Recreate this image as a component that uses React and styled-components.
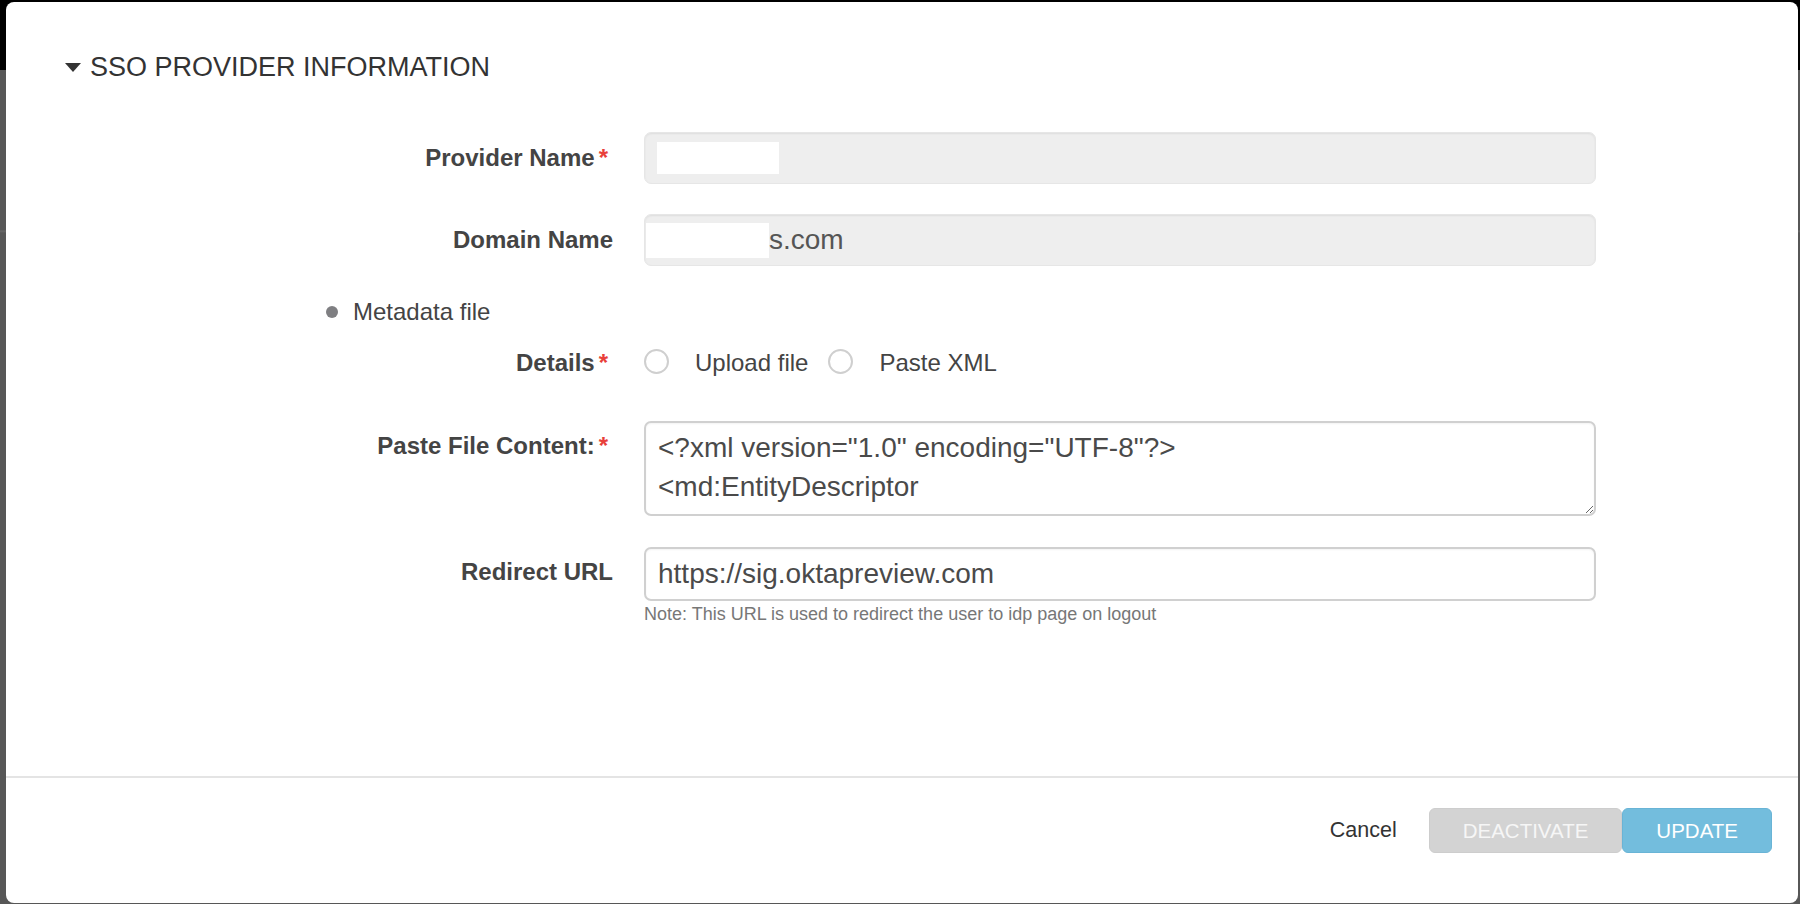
import styled, { createGlobalStyle } from "styled-components"

const GlobalStyle = createGlobalStyle`
  html, body {
    margin: 0;
    padding: 0;
  }
  body {
    font-family: "Liberation Sans", Arial, Helvetica, sans-serif;
    background: #000;
  }
  * {
    box-sizing: border-box;
  }
`

const App = () => {
  return (
    <>
      <GlobalStyle />
      <Page>
        <Modal>
          <Body>
            <SectionTitle>
              <Caret />
              SSO PROVIDER INFORMATION
            </SectionTitle>

            <Row $mt={49}>
              <Label $pt={12} $required>
                Provider Name<Required>*</Required>
              </Label>
              <ReadonlyField>
                <Redact $ml={12} $w={122} $h={32} />
              </ReadonlyField>
            </Row>

            <Row $mt={30}>
              <Label $pt={12}>Domain Name</Label>
              <ReadonlyField>
                <Redact $ml={1} $w={123} $h={35} />
                <FieldText>s.com</FieldText>
              </ReadonlyField>
            </Row>

            <BulletRow>
              <Dot />
              Metadata file
            </BulletRow>

            <Row $mt={23}>
              <Label $pt={0} $required>
                Details<Required>*</Required>
              </Label>
              <RadioGroup>
                <Radio />
                <RadioText>Upload file</RadioText>
                <Radio />
                <RadioText>Paste XML</RadioText>
              </RadioGroup>
            </Row>

            <Row $mt={44}>
              <Label $pt={11} $required>
                Paste File Content:<Required>*</Required>
              </Label>
              <XmlArea
                readOnly
                defaultValue={'<?xml version="1.0" encoding="UTF-8"?>\n<md:EntityDescriptor'}
              />
            </Row>

            <Row $mt={31}>
              <Label $pt={11}>Redirect URL</Label>
              <div>
                <TextInput readOnly defaultValue="https://sig.oktapreview.com" />
                <Note>Note: This URL is used to redirect the user to idp page on logout</Note>
              </div>
            </Row>
          </Body>

          <Footer>
            <CancelLink>Cancel</CancelLink>
            <Button $variant="muted">DEACTIVATE</Button>
            <Button $variant="primary">UPDATE</Button>
          </Footer>
        </Modal>
      </Page>
    </>
  )
}

export default App

const Page = styled.div`
  height: 904px;
  width: 1800px;
  display: flex;
  padding: 2px 2px 1px 6px;
  background: linear-gradient(
    to bottom,
    #000 0,
    #000 70px,
    #575757 70px,
    #575757 230px,
    #6a6a6a 231px,
    #575757 233px,
    #575757 100%
  );
`

const Modal = styled.div`
  flex: 1;
  display: flex;
  flex-direction: column;
  background: #fff;
  border-radius: 8px;
  overflow: hidden;
`

const Body = styled.div`
  flex: 1;
  padding-top: 49px;
`

const SectionTitle = styled.div`
  display: flex;
  align-items: center;
  gap: 9px;
  padding-left: 59px;
  font-size: 27px;
  line-height: 32px;
  color: #333;
`

const Caret = styled.span`
  width: 0;
  height: 0;
  border-left: 8px solid transparent;
  border-right: 8px solid transparent;
  border-top: 9px solid #333;
`

const Row = styled.div`
  display: grid;
  grid-template-columns: 313px 952px;
  column-gap: 31px;
  margin-left: 294px;
  margin-top: ${(p) => p.$mt}px;
  align-items: start;
`

const Label = styled.label`
  text-align: right;
  font-size: 24px;
  line-height: 28px;
  font-weight: 700;
  color: #444;
  padding-top: ${(p) => p.$pt}px;
  padding-right: ${(p) => (p.$required ? 5 : 0)}px;
  white-space: nowrap;
`

const Required = styled.span`
  color: #e8403a;
  margin-left: 4px;
`

const ReadonlyField = styled.div`
  height: 52px;
  display: flex;
  align-items: center;
  background: #eeeeee;
  border: 1px solid #e6e6e6;
  border-radius: 7px;
  box-shadow: inset 0 1px 2px rgba(0, 0, 0, 0.07);
  font-size: 28px;
  color: #555;
`

const Redact = styled.span`
  display: inline-block;
  flex-shrink: 0;
  margin-left: ${(p) => p.$ml}px;
  width: ${(p) => p.$w}px;
  height: ${(p) => p.$h}px;
  background: #fff;
`

const FieldText = styled.span`
  line-height: 32px;
`

const BulletRow = styled.div`
  display: flex;
  align-items: center;
  gap: 15px;
  margin-left: 320px;
  margin-top: 32px;
  font-size: 24px;
  line-height: 28px;
  color: #444;
`

const Dot = styled.span`
  width: 12px;
  height: 12px;
  border-radius: 50%;
  background: #7f7f82;
`

const RadioGroup = styled.div`
  display: flex;
  align-items: flex-start;
  height: 28px;
`

const Radio = styled.span`
  width: 25px;
  height: 25px;
  border-radius: 50%;
  border: 2px solid #cfcfcf;
  background: #fff;
  flex-shrink: 0;
`

const RadioText = styled.span`
  margin-left: 26px;
  margin-right: 20px;
  font-size: 24px;
  line-height: 28px;
  color: #444;
`

const XmlArea = styled.textarea`
  display: block;
  width: 952px;
  height: 95px;
  padding: 5px 12px;
  border: 2px solid #d0d0d0;
  border-radius: 7px;
  box-shadow: inset 0 1px 2px rgba(0, 0, 0, 0.05);
  font-family: "Liberation Sans", Arial, Helvetica, sans-serif;
  font-size: 28px;
  line-height: 39px;
  color: #4a4a4a;
  resize: vertical;
  overflow: hidden;
  outline: none;
`

const TextInput = styled.input`
  display: block;
  width: 952px;
  height: 54px;
  padding: 0 12px;
  border: 2px solid #d0d0d0;
  border-radius: 7px;
  box-shadow: inset 0 1px 2px rgba(0, 0, 0, 0.05);
  font-family: "Liberation Sans", Arial, Helvetica, sans-serif;
  font-size: 28px;
  color: #4a4a4a;
  outline: none;
`

const Note = styled.div`
  margin-top: 3px;
  font-size: 18px;
  line-height: 20px;
  color: #777;
`

const Footer = styled.div`
  height: 127px;
  flex-shrink: 0;
  display: flex;
  justify-content: flex-end;
  align-items: flex-start;
  border-top: 2px solid #e4e4e4;
  padding: 30px 26px 50px 0;
`

const CancelLink = styled.span`
  font-size: 21.5px;
  line-height: 45px;
  color: #333;
  margin-right: 32px;
  cursor: pointer;
`

const Button = styled.button`
  height: 45px;
  padding: 0 33px;
  border-radius: 6px;
  font-family: "Liberation Sans", Arial, Helvetica, sans-serif;
  font-size: 20.5px;
  cursor: pointer;
  border: 1px solid ${(p) => (p.$variant === "primary" ? "#69b4d6" : "#cdcdcd")};
  background: ${(p) => (p.$variant === "primary" ? "#73bddd" : "#d3d3d3")};
  color: ${(p) => (p.$variant === "primary" ? "#fff" : "#f6f6f6")};
`
